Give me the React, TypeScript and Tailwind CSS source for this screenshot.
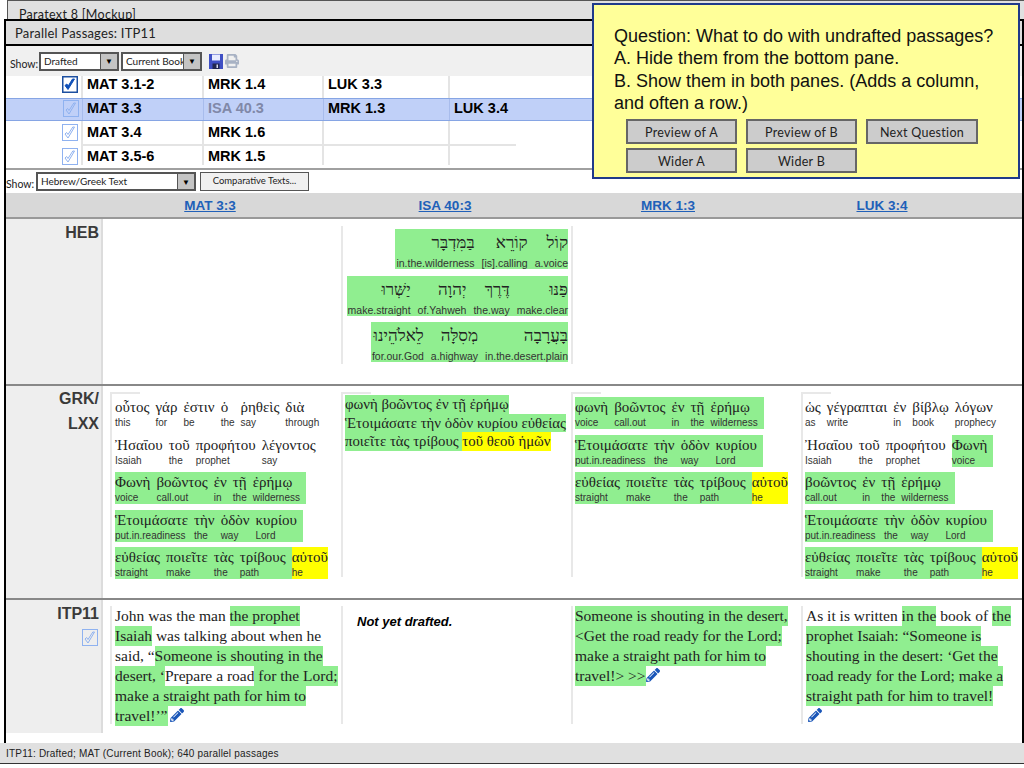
import { ReactNode } from 'react'
import { FaPencilAlt, FaPrint } from 'react-icons/fa'

const sketch = "font-[Lato,sans-serif]"
const serif = "font-['Liberation_Serif',serif]"

type TWord = [string, string]
type TSeg = { t: string; c?: 'g' | 'y' }

function Check({ on = false, className = '' }: { on?: boolean; className?: string }) {
  if (on) {
    return (
      <svg width="16" height="17" viewBox="0 0 16 17" className={className}>
        <rect x="0.75" y="0.75" width="14.5" height="15.5" fill="#fff" stroke="#1c4fa0" strokeWidth="1.5" />
        <path d="M3 9.5 L6 13.5 L12.5 3 L10.5 3 L6.3 9.8 L4.8 8 Z" fill="#1050b8" stroke="#1050b8" strokeWidth="1" />
      </svg>
    )
  }
  return (
    <svg width="16" height="17" viewBox="0 0 16 17" className={className}>
      <rect x="0.5" y="0.5" width="15" height="16" fill="none" stroke="#8fb2f0" strokeWidth="1" />
      <path d="M3 10 L6 14 L12.5 3 L10.8 3 L6 10.5 L4.6 8.5 Z" fill="none" stroke="#8fb2f0" strokeWidth="1" />
    </svg>
  )
}

function Floppy() {
  return (
    <svg width="14" height="15" viewBox="0 0 14 15">
      <rect x="0" y="0" width="14" height="15" fill="#3f4fc4" />
      <rect x="3" y="0.5" width="8" height="6" fill="#e8ecff" />
      <rect x="3.5" y="9.5" width="7" height="5.5" fill="#20264f" />
      <rect x="7.5" y="10.5" width="1.5" height="3.5" fill="#d8dcf0" />
    </svg>
  )
}

function Select({ label, className }: { label: string; className: string }) {
  return (
    <div className={`flex h-[19px] items-stretch overflow-hidden border-2 border-[#555] bg-white ${className}`}>
      <span className={`${sketch} flex-1 overflow-hidden pl-[3px] text-[10px] leading-[14px] whitespace-nowrap text-[#222]`}>{label}</span>
      <span className="flex w-[17px] shrink-0 items-center justify-center border-l border-[#555] bg-[#c4c4c4] text-[8px] text-black">▼</span>
    </div>
  )
}

function TableRow({ cells, pad, selected = false, on = false, line = false }: { cells: ReactNode[]; pad: string; selected?: boolean; on?: boolean; line?: boolean }) {
  return (
    <div className={`flex h-full text-[14.5px] leading-[16px] font-bold ${selected ? 'border-y border-[#86a5e4] bg-[#c0d0f8]' : ''}`}>
      <div className={`flex w-[77px] items-start justify-end pr-[3px] ${pad} ${selected ? 'border-r border-[#a8bcec]' : 'border-r-2 border-[#e4e4e4]'}`}>
        <Check on={on} />
      </div>
      {cells.map((cell, i) => (
        <div
          key={i}
          className={`pl-[4px] ${pad} ${['w-[121px]', 'w-[120px]', 'w-[126px]', 'w-[66px]'][i]} ${i < 3 ? (selected ? 'border-r border-[#a8bcec]' : 'border-r-2 border-[#e4e4e4]') : ''} ${line ? 'border-b-2 border-[#e4e4e4]' : ''}`}
        >
          {cell}
        </div>
      ))}
    </div>
  )
}

function HebLine({ words }: { words: TWord[] }) {
  return (
    <div dir="rtl" className="flex h-[40px] w-fit gap-[7px] bg-[#90ee90] pl-[1px]">
      {words.map(([w, g]) => (
        <div key={g} className="flex flex-col items-start">
          <span className={`${serif} h-[28px] text-[17px] leading-[27px] text-[#222]`}>{w}</span>
          <span dir="ltr" className="text-[10.5px] leading-[12px] text-[#333]">{g}</span>
        </div>
      ))}
    </div>
  )
}

function GrkLine({ words, tail, pre }: { words: TWord[]; tail?: TWord; pre?: boolean }) {
  return (
    <div className="flex h-[32px] w-fit">
      <div className={`flex ${pre ? '' : 'bg-[#90ee90]'}`}>
        {words.map(([w, g], i) => (
          <Stack key={i} w={w} g={g} />
        ))}
      </div>
      {tail ? (
        <div className="bg-[#ffff00]">
          <Stack w={tail[0]} g={tail[1]} last />
        </div>
      ) : null}
    </div>
  )
}

function Stack({ w, g, last = false }: { w: string; g: string; last?: boolean }) {
  return (
    <div className={`flex flex-col ${last ? '' : 'pr-[6px]'}`}>
      <span className={`${serif} h-[20px] text-[15px] leading-[21px] whitespace-nowrap text-[#222]`}>{w}</span>
      <span className="text-[10px] leading-[12px] whitespace-nowrap text-[#333]">{g}</span>
    </div>
  )
}

function Para({ lines }: { lines: TSeg[][] }) {
  return (
    <div className={`${serif} text-[15.5px] leading-[20px] text-[#222]`}>
      {lines.map((segs, i) => (
        <div key={i} className="flex h-[20px] items-center whitespace-pre">
          {segs.map((s, j) => (
            <span key={j} className={`h-[20px] ${s.c === 'g' ? 'bg-[#90ee90]' : ''}`}>{s.t}</span>
          ))}
        </div>
      ))}
    </div>
  )
}

const g = (t: string): TSeg => ({ t, c: 'g' })
const n = (t: string): TSeg => ({ t })

function Pen({ className = '' }: { className?: string }) {
  return <FaPencilAlt className={`text-[14px] text-[#1a56b8] ${className}`} />
}

function Label({ children }: { children: ReactNode }) {
  return (
    <div className="w-[97px] shrink-0 border-r-2 border-[#dcdcdc] bg-[#eeeeee] pr-[2px] text-right text-[16px] font-bold text-[#3a3a3a]">
      {children}
    </div>
  )
}

function Grk({ children, w, pad = 'pl-[2px]' }: { children: ReactNode; w: string; pad?: string }) {
  return (
    <div className={`${w} mt-[6px] h-[185px] shrink-0 border-l-2 border-[#e8e8e8]`}>
      <div className="h-0 w-[28px] border-t-2 border-[#e8e8e8]" />
      <div className={`pt-[3px] ${pad}`}>{children}</div>
    </div>
  )
}

export default function App() {
  return (
    <div className="relative h-[768px] w-[1024px] overflow-hidden bg-white font-['Liberation_Sans',Arial,sans-serif]">
      {/* window behind */}
      <div className={`${sketch} ml-[7px] h-[19px] overflow-hidden border-t border-l border-[#555] bg-[#e0e0e0] pl-[11px] text-[12.5px] leading-[27px] tracking-[0.3px] text-[#222]`}>
        Paratext 8 [Mockup]
      </div>

      {/* parallel passages window */}
      <div className="ml-[4px] flex h-[724px] w-[1020px] flex-col border-x-2 border-t-2 border-black">
        <div className={`${sketch} flex h-[25px] shrink-0 items-center border-b-2 border-black bg-[#dedede] pt-[3px] pl-[9px] text-[13px] tracking-[0.2px] text-[#222]`}>
          Parallel Passages: ITP11
        </div>
        <div className={`${sketch} flex h-[30px] shrink-0 items-center gap-[2px] bg-[#f0f0f0] pl-[4px] text-[10.5px] text-[#222]`}>
          <span className="mt-[7px] w-[27px] whitespace-nowrap">Show:</span>
          <Select label="Drafted" className="w-[80px]" />
          <Select label="Current Book" className="w-[81px]" />
          <span className="ml-[5px] flex items-center gap-[2px]">
            <Floppy />
            <FaPrint className="text-[14px] text-[#a8b2c4]" />
          </span>
        </div>

        <div className="grid h-[89px] shrink-0 grid-rows-[22px_23px_25px_19px] text-black">
          <TableRow on pad="pt-0" cells={['MAT 3.1-2', 'MRK 1.4', 'LUK 3.3', '']} />
          <TableRow
            selected
            pad="pt-[1px]"
            cells={['MAT 3.3', <span key="isa" className="text-[#8088a8]">ISA 40.3</span>, 'MRK 1.3', 'LUK 3.4']}
          />
          <TableRow line pad="pt-[3px]" cells={['MAT 3.4', 'MRK 1.6', '', '']} />
          <TableRow pad="pt-[2px]" cells={['MAT 3.5-6', 'MRK 1.5', '', '']} />
        </div>

        <div className="mt-[3px] h-[2px] shrink-0 bg-[#a0a0a0]" />
        <div className={`${sketch} flex h-[23px] shrink-0 items-center gap-[3px] text-[10.5px] text-[#222]`}>
          <span className="mt-[6px] w-[27px] whitespace-nowrap">Show:</span>
          <Select label="Hebrew/Greek Text" className="w-[160px]" />
          <span className="ml-[1px] flex h-[19px] w-[109px] items-center justify-center border border-[#555] bg-[#f0f0f0] text-[9.5px]">
            Comparative Texts...
          </span>
        </div>

        <div className="grid h-[26px] shrink-0 grid-cols-[316px_246px_200px_228px] border-b-2 border-[#999] bg-[#d8d8d8] text-center text-[13.5px] leading-[25px] font-bold text-[#2060b8] underline">
          <span className="pl-[92px]">MAT 3:3</span>
          <span>ISA 40:3</span>
          <span>MRK 1:3</span>
          <span>LUK 3:4</span>
        </div>

        {/* HEB */}
        <div className="flex h-[167px] shrink-0 border-b-2 border-[#888]">
          <Label>
            <div className="pt-[2px]">HEB</div>
          </Label>
          <div className="mt-[7px] mb-[20px] ml-[238px] flex w-[230px] flex-col items-end gap-[6.5px] border-l-2 border-[#e8e8e8] pt-[3px] pr-[3px]">
            <HebLine words={[['קוֹל', 'a.voice'], ['קוֹרֵא', '[is].calling'], ['בַּמִּדְבָּר', 'in.the.wilderness']]} />
            <HebLine words={[['פַּנּוּ', 'make.clear'], ['דֶּרֶךְ', 'the.way'], ['יְהוָה', 'of.Yahweh'], ['יַשְּׁרוּ', 'make.straight']]} />
            <HebLine words={[['בָּעֲרָבָה', 'in.the.desert.plain'], ['מְסִלָּה', 'a.highway'], ['לֵאלֹהֵינוּ', 'for.our.God']]} />
          </div>
          <div className="mt-[7px] mb-[20px] border-l-2 border-[#e8e8e8]" />
        </div>

        {/* GRK */}
        <div className="flex h-[214px] shrink-0 border-b-2 border-[#888]">
          <Label>
            <div className="leading-[25px]">GRK/<br />LXX</div>
          </Label>
          <div className="w-[7px] shrink-0" />
          <Grk w="w-[231px]" pad="pl-[3px]">
            <div className="flex flex-col gap-[5.5px]">
              <GrkLine pre words={[['οὗτος', 'this'], ['γάρ', 'for'], ['ἐστιν', 'be'], ['ὁ', 'the'], ['ῥηθεὶς', 'say'], ['διὰ', 'through']]} />
              <GrkLine pre words={[['Ἠσαΐου', 'Isaiah'], ['τοῦ', 'the'], ['προφήτου', 'prophet'], ['λέγοντος', 'say']]} />
              <GrkLine words={[['Φωνὴ', 'voice'], ['βοῶντος', 'call.out'], ['ἐν', 'in'], ['τῇ', 'the'], ['ἐρήμῳ', 'wilderness']]} />
              <GrkLine words={[['Ἑτοιμάσατε', 'put.in.readiness'], ['τὴν', 'the'], ['ὁδὸν', 'way'], ['κυρίου', 'Lord']]} />
              <GrkLine words={[['εὐθείας', 'straight'], ['ποιεῖτε', 'make'], ['τὰς', 'the'], ['τρίβους', 'path']]} tail={['αὐτοῦ', 'he']} />
            </div>
          </Grk>
          <Grk w="w-[230px]">
            <div className={`${serif} -mt-[2px] text-[14.8px] leading-[18.5px] whitespace-pre text-[#222]`}>
              <div className="h-[18.5px] w-fit bg-[#90ee90]">φωνὴ βοῶντος ἐν τῇ ἐρήμῳ</div>
              <div className="h-[18.5px] w-fit bg-[#90ee90]">Ἑτοιμάσατε τὴν ὁδὸν κυρίου εὐθείας</div>
              <div className="flex h-[18.5px]">
                <span className="bg-[#90ee90]">ποιεῖτε τὰς τρίβους </span>
                <span className="bg-[#ffff00]">τοῦ θεοῦ ἡμῶν</span>
              </div>
            </div>
          </Grk>
          <Grk w="w-[230px]">
            <div className="flex flex-col gap-[5.5px]">
              <GrkLine words={[['φωνὴ', 'voice'], ['βοῶντος', 'call.out'], ['ἐν', 'in'], ['τῇ', 'the'], ['ἐρήμῳ', 'wilderness']]} />
              <GrkLine words={[['Ἑτοιμάσατε', 'put.in.readiness'], ['τὴν', 'the'], ['ὁδὸν', 'way'], ['κυρίου', 'Lord']]} />
              <GrkLine words={[['εὐθείας', 'straight'], ['ποιεῖτε', 'make'], ['τὰς', 'the'], ['τρίβους', 'path']]} tail={['αὐτοῦ', 'he']} />
            </div>
          </Grk>
          <Grk w="w-[220px]">
            <div className="flex flex-col gap-[5.5px]">
              <GrkLine pre words={[['ὡς', 'as'], ['γέγραπται', 'write'], ['ἐν', 'in'], ['βίβλῳ', 'book'], ['λόγων', 'prophecy']]} />
              <div className="flex h-[32px]">
                <GrkLine pre words={[['Ἠσαΐου', 'Isaiah'], ['τοῦ', 'the'], ['προφήτου', 'prophet']]} />
                <GrkLine words={[['Φωνὴ', 'voice']]} />
              </div>
              <GrkLine words={[['βοῶντος', 'call.out'], ['ἐν', 'in'], ['τῇ', 'the'], ['ἐρήμῳ', 'wilderness']]} />
              <GrkLine words={[['Ἑτοιμάσατε', 'put.in.readiness'], ['τὴν', 'the'], ['ὁδὸν', 'way'], ['κυρίου', 'Lord']]} />
              <GrkLine words={[['εὐθείας', 'straight'], ['ποιεῖτε', 'make'], ['τὰς', 'the'], ['τρίβους', 'path']]} tail={['αὐτοῦ', 'he']} />
            </div>
          </Grk>
        </div>

        {/* ITP11 */}
        <div className="flex h-[133px] shrink-0">
          <Label>
            <div className="pt-[2px]">ITP11</div>
            <div className="mt-[3px] flex justify-end pr-[1px]"><Check /></div>
          </Label>
          <div className="w-[7px] shrink-0" />
          <div className="mt-[6px] h-[118px] w-[231px] shrink-0 border-l-2 border-[#e8e8e8] pl-[3px]">
            <Para
              lines={[
                [n('John was the man '), g('the prophet')],
                [g('Isaiah'), n(' was talking about when he')],
                [n('said, “'), g('Someone is shouting in the')],
                [g('desert, ‘'), n('Prepare a road'), g(' for the Lord;')],
                [g('make a straight path for him to')],
                [g('travel!’”')],
              ]}
            />
            <Pen className="relative -top-[18px] left-[55px]" />
          </div>
          <div className="mt-[6px] h-[118px] w-[230px] shrink-0 border-l-2 border-[#e8e8e8] pt-[6px] pl-[14px] text-[13px] font-bold text-black italic">
            Not yet drafted.
          </div>
          <div className="mt-[6px] h-[118px] w-[230px] shrink-0 border-l-2 border-[#e8e8e8] pl-[2px]">
            <Para
              lines={[
                [g('Someone is shouting in the desert,')],
                [g('<Get the road ready for the Lord;')],
                [g('make a straight path for him to')],
                [g('travel!> >>')],
              ]}
            />
            <Pen className="relative -top-[18px] left-[71px]" />
          </div>
          <div className="mt-[6px] h-[118px] w-[220px] shrink-0 border-l-2 border-[#e8e8e8] pl-[3px]">
            <Para
              lines={[
                [n('As it is written '), g('in the'), n(' book of '), g('the')],
                [g('prophet Isaiah: “Someone is')],
                [g('shouting in the desert: ‘Get the')],
                [g('road ready for the Lord; make a')],
                [g('straight path for him to travel!')],
              ]}
            />
            <Pen className="mt-[2px] ml-[2px]" />
          </div>
        </div>
      </div>

      {/* status bar */}
      <div className="flex h-[21px] items-center border-b border-[#333] bg-[#e0e0e0] pl-[6px] text-[10px] tracking-[0.2px] text-[#222]">
        ITP11: Drafted; MAT (Current Book); 640 parallel passages
      </div>

      {/* question popover */}
      <div className="absolute top-[3px] left-[592px] h-[176px] w-[428px] border-2 border-[#1f3a8a] bg-[#ffff99] pt-[20px] pl-[20px]">
        <div className="text-[18px] leading-[22.3px] whitespace-nowrap text-[#111]">
          Question: What to do with undrafted passages?<br />
          A. Hide them from the bottom pane.<br />
          B. Show them in both panes. (Adds a column,<br />
          and often a row.)
        </div>
        <div className={`${sketch} mt-[5px] ml-[12px] grid w-[352px] grid-cols-[111px_111px_112px] gap-x-[9px] gap-y-[4px] text-[12.5px] tracking-[0.3px] text-[#222]`}>
          {['Preview of A', 'Preview of B', 'Next Question', 'Wider A', 'Wider B'].map((b) => (
            <div key={b} className="flex h-[25px] items-center justify-center border-2 border-[#666] bg-[#cccccc] pt-[3px]">{b}</div>
          ))}
        </div>
      </div>
    </div>
  )
}
